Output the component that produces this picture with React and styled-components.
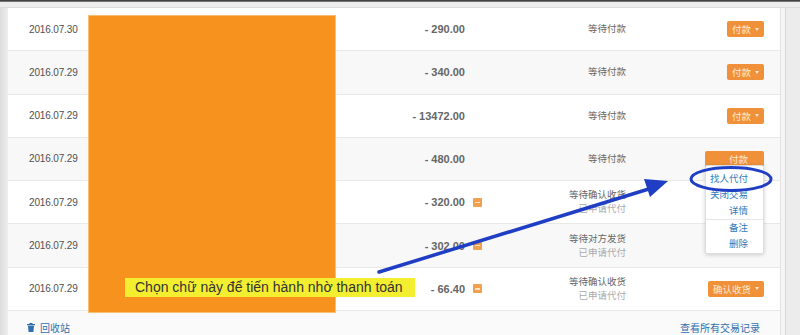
import React from 'react';
import styled, { createGlobalStyle } from 'styled-components';

const Global = createGlobalStyle`
  html, body { margin: 0; padding: 0; background: #ebebeb; }
  body { font-family: "Liberation Sans", "Noto Sans CJK SC", sans-serif; overflow: hidden; }
  #root { width: 800px; height: 335px; }
`;

const Stage = styled.div`
  position: relative;
  width: 800px;
  height: 335px;
  overflow: hidden;
  background: #ebebeb;
  display: flex;
  flex-direction: column;
`;

const TopEdge = styled.div`
  flex: none;
  height: 2px;
  background: linear-gradient(#2a2a2a, #8c8c8c);
`;

const TopGap = styled.div`
  flex: none;
  height: 5px;
  background: #ededed;
  border-bottom: 1px solid #dcdcdc;
`;

const Body = styled.div`
  flex: 1;
  min-height: 0;
  display: flex;
`;

const LeftRail = styled.div`
  flex: none;
  width: 8px;
  background: linear-gradient(90deg, #dcdcdc, #eeeeee);
`;

const Panel = styled.div`
  flex: none;
  width: 772px;
  background: #fff;
  display: flex;
  flex-direction: column;
`;

const RightRail = styled.div`
  flex: 1;
  display: flex;
  border-left: 1px solid #e2e2e2;
  background: #f5f5f5;
`;

const RailLine = styled.div`
  margin-left: 4px;
  flex: 1;
  border-left: 1px solid #d8d8d8;
  background: #ececec;
`;

const Row = styled.div`
  position: relative;
  z-index: ${p => (p.$raised ? 2 : 1)};
  display: grid;
  grid-template-columns: 80px 252px 125px 25px 136px 138px 16px;
  align-items: center;
  height: 44.43px;
  box-sizing: border-box;
  border-bottom: 1px solid #e8e8e8;
  background: ${p => (p.$alt ? '#f8f8f8' : '#ffffff')};
`;

const DateCell = styled.div`
  padding-left: 21px;
  font-size: 10px;
  letter-spacing: -0.15px;
  color: #505050;
`;

const Blank = styled.div``;

const Amount = styled.div`
  text-align: right;
  font-size: 11px;
  font-weight: 700;
  color: #666;
`;

const IconCell = styled.div`
  display: flex;
  padding-left: 8px;
`;

const Flag = styled.span`
  width: 9px;
  height: 9px;
  border-radius: 1px;
  background: #f0a04e;
  display: flex;
  align-items: center;
  justify-content: center;
  &::after {
    content: '';
    width: 5px;
    height: 1.5px;
    background: #fde3c4;
  }
`;

const Status = styled.div`
  text-align: right;
  font-size: 9.5px;
  line-height: 14px;
  color: #666;
`;

const SubStatus = styled.div`
  color: #aaa;
`;

const Action = styled.div`
  position: relative;
  height: 100%;
  display: flex;
  align-items: center;
  justify-content: flex-end;
`;

const OrangeButton = styled.span`
  box-sizing: border-box;
  height: 16px;
  width: ${p => (p.$open ? '59px' : 'auto')};
  padding: 0 ${p => (p.$open ? '16px' : '5px')} 0 5px;
  justify-content: ${p => (p.$open ? 'flex-end' : 'center')};
  display: flex;
  align-items: center;
  gap: 4px;
  border-radius: 2px;
  background: #f0913a;
  color: #fde9d6;
  font-size: 9.5px;
`;

const Caret = styled.span`
  width: 0;
  height: 0;
  border-left: 2.5px solid transparent;
  border-right: 2.5px solid transparent;
  border-top: 3px solid ${p => p.$color || '#fde9d6'};
`;

const LinkButton = styled.span`
  display: flex;
  align-items: center;
  gap: 5px;
  padding: 5px 6px 0 0;
  font-size: 9.5px;
  color: #2f7bbb;
`;

const Menu = styled.div`
  position: absolute;
  top: 27px;
  right: 0;
  z-index: 2;
  width: 59px;
  box-sizing: border-box;
  padding: 5px 0 1px;
  background: #fff;
  border: 1px solid #dedede;
  border-radius: 2px;
  box-shadow: 0 1px 4px rgba(0, 0, 0, 0.18);
`;

const MenuItem = styled.div`
  height: 16px;
  line-height: 16px;
  padding-right: 15px;
  text-align: right;
  font-size: 9.5px;
  color: #2f7bbb;
  white-space: nowrap;
`;

const MenuDivider = styled.div`
  height: 1px;
  background: #e6e6e6;
`;

const Footer = styled.div`
  flex: 1;
  display: flex;
  justify-content: space-between;
  padding: 9px 20px 0 19px;
  background: #fafafa;
  font-size: 10px;
  color: #2f6fae;
`;

const FooterLink = styled.span`
  display: flex;
  align-items: center;
  gap: 5px;
`;

const Redaction = styled.div`
  position: absolute;
  z-index: 4;
  left: 88px;
  top: 15px;
  width: 248px;
  height: 298px;
  box-sizing: border-box;
  background: #f7921f;
  border: 1px solid #fbbd72;
`;

const Caption = styled.div`
  position: absolute;
  z-index: 5;
  left: 125px;
  top: 278px;
  width: 290px;
  height: 19px;
  box-sizing: border-box;
  padding-left: 10px;
  background: #f3ee30;
  color: #333;
  font-size: 14px;
  line-height: 19px;
  white-space: nowrap;
`;

const Annotation = styled.svg`
  position: absolute;
  left: 0;
  top: 0;
  z-index: 6;
  pointer-events: none;
`;

const rows = [
  { date: '2016.07.30', amount: '- 290.00', status: ['等待付款'], action: { type: 'btn', label: '付款' } },
  { date: '2016.07.29', amount: '- 340.00', status: ['等待付款'], action: { type: 'btn', label: '付款' } },
  { date: '2016.07.29', amount: '- 13472.00', status: ['等待付款'], action: { type: 'btn', label: '付款' } },
  { date: '2016.07.29', amount: '- 480.00', status: ['等待付款'], action: { type: 'open', label: '付款' } },
  { date: '2016.07.29', amount: '- 320.00', flag: true, status: ['等待确认收货', '已申请代付'], action: null },
  { date: '2016.07.29', amount: '- 302.00', flag: true, status: ['等待对方发货', '已申请代付'], action: { type: 'link', label: '退款' } },
  { date: '2016.07.29', amount: '- 66.40', flag: true, status: ['等待确认收货', '已申请代付'], action: { type: 'btn', label: '确认收货' } },
];

function TrashIcon() {
  return (
    <svg width="8" height="9" viewBox="0 0 8 9">
      <rect x="0" y="1" width="8" height="1.3" fill="#2f6fae" />
      <rect x="2.5" y="0" width="3" height="1.2" fill="#2f6fae" />
      <path d="M1 2.8h6l-0.6 6.2H1.6z" fill="#2f6fae" />
    </svg>
  );
}

function ActionContent({ action }) {
  if (!action) return null;
  if (action.type === 'link') {
    return (
      <LinkButton>
        {action.label}
        <Caret $color="#2f7bbb" />
      </LinkButton>
    );
  }
  if (action.type === 'open') {
    return (
      <>
        <OrangeButton $open>{action.label}</OrangeButton>
        <Menu>
          <MenuItem>找人代付</MenuItem>
          <MenuItem>关闭交易</MenuItem>
          <MenuItem>详情</MenuItem>
          <MenuDivider />
          <MenuItem>备注</MenuItem>
          <MenuItem>删除</MenuItem>
        </Menu>
      </>
    );
  }
  return (
    <OrangeButton>
      {action.label}
      <Caret />
    </OrangeButton>
  );
}

export default function App() {
  return (
    <>
      <Global />
      <Stage>
        <TopEdge />
        <TopGap />
        <Body>
          <LeftRail />
          <Panel>
            {rows.map((r, i) => (
              <Row key={i} $alt={i % 2 === 1} $raised={r.action && r.action.type === 'open'}>
                <DateCell>{r.date}</DateCell>
                <Blank />
                <Amount>{r.amount}</Amount>
                <IconCell>{r.flag && <Flag />}</IconCell>
                <Status>
                  <div>{r.status[0]}</div>
                  {r.status[1] && <SubStatus>{r.status[1]}</SubStatus>}
                </Status>
                <Action>
                  <ActionContent action={r.action} />
                </Action>
                <Blank />
              </Row>
            ))}
            <Footer>
              <FooterLink>
                <TrashIcon />
                回收站
              </FooterLink>
              <FooterLink>查看所有交易记录</FooterLink>
            </Footer>
          </Panel>
          <RightRail>
            <RailLine />
          </RightRail>
        </Body>
        <Redaction />
        <Caption>Chọn chữ này để tiến hành nhờ thanh toán</Caption>
        <Annotation width="800" height="335" viewBox="0 0 800 335">
          <line x1="379" y1="272" x2="652" y2="188" stroke="#1f3ec4" strokeWidth="3.5" strokeLinecap="round" />
          <polygon points="668,181 644,179 650,197" fill="#1f3ec4" />
          <ellipse cx="731" cy="179" rx="40" ry="11.5" fill="none" stroke="#1f3ec4" strokeWidth="3" />
        </Annotation>
      </Stage>
    </>
  );
}
